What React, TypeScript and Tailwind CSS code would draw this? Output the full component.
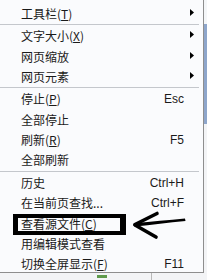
import React from 'react';

type Item =
  | { kind: 'sep' }
  | { kind: 'item'; label: string; key?: string; suffix?: string; shortcut?: string; sub?: boolean };

const items: Item[] = [
  { kind: 'item', label: '工具栏', key: 'T', sub: true },
  { kind: 'sep' },
  { kind: 'item', label: '文字大小', key: 'X', sub: true },
  { kind: 'item', label: '网页缩放', sub: true },
  { kind: 'item', label: '网页元素', sub: true },
  { kind: 'sep' },
  { kind: 'item', label: '停止', key: 'P', shortcut: 'Esc' },
  { kind: 'item', label: '全部停止' },
  { kind: 'item', label: '刷新', key: 'R', shortcut: 'F5' },
  { kind: 'item', label: '全部刷新' },
  { kind: 'sep' },
  { kind: 'item', label: '历史', shortcut: 'Ctrl+H' },
  { kind: 'item', label: '在当前页查找', suffix: '...', shortcut: 'Ctrl+F' },
  { kind: 'item', label: '查看源文件', key: 'C' },
  { kind: 'item', label: '用编辑模式查看' },
  { kind: 'item', label: '切换全屏显示', key: 'F', shortcut: 'F11' },
];

function SubArrow() {
  return (
    <svg width="4" height="7" viewBox="0 0 4 7" className="block">
      <path d="M0 0 L4 3.5 L0 7 Z" fill="#000" />
    </svg>
  );
}

function MenuRow({ item }: { item: Extract<Item, { kind: 'item' }> }) {
  return (
    <div className="flex h-[20.3px] items-center pl-[21px] pr-[9px]">
      <span className="flex-1 whitespace-nowrap">
        {item.label}
        {item.key && (
          <>
            (<span className="underline underline-offset-1">{item.key}</span>)
          </>
        )}
        {item.suffix}
      </span>
      {item.shortcut && <span className="mr-[10px] font-['Liberation_Sans',sans-serif]">{item.shortcut}</span>}
      {item.sub && (
        <span className="-mt-[3px]">
          <SubArrow />
        </span>
      )}
    </div>
  );
}

export default function App() {
  return (
    <div className="relative h-[280px] w-[207px] overflow-hidden bg-[#f3f4f6] font-['Noto_Sans_CJK_SC','Liberation_Sans',sans-serif] text-[12px] leading-none text-[#1a1a1a]">
      <div className="flex">
        <div className="relative h-[273px] w-[204px] overflow-hidden border-b border-r border-[#8e8e8e] bg-[#fafbfd] pt-[3.5px]">
          {items.map((item, i) =>
            item.kind === 'sep' ? (
              <div key={i} className="h-[2.3px] pt-[0.3px]">
                <div className="mr-[4px] h-px bg-[#c4c7cc]" />
              </div>
            ) : (
              <MenuRow key={i} item={item} />
            )
          )}

          {/* highlight box drawn over the screenshot */}
          <div className="absolute left-[13px] top-[214px] h-[21px] w-[113px] border-[4px] border-l-[5px] border-r-[6px] border-black" />

          {/* hand drawn arrow */}
          <svg className="absolute left-[130px] top-[208px]" width="60" height="34" viewBox="0 0 60 34">
            <path d="M5 16.5 L27 5.5" stroke="#000" strokeWidth="3.6" strokeLinecap="round" fill="none" />
            <path d="M5 17 L26 29" stroke="#000" strokeWidth="3.6" strokeLinecap="round" fill="none" />
            <path d="M5 15 C 22 13.5, 38 12, 55 10.5 L55.5 13 C 38 14.5, 22 17, 5 18.5 Z" fill="#000" />
          </svg>
        </div>
        <div className="flex w-[3px] flex-col">
          <div className="h-[24px] bg-[#f4f6f8]" />
          <div className="h-[100px] bg-[#8ea6cb]" />
        </div>
      </div>
      <div className="relative h-[7px]">
        <div className="absolute left-[97px] top-[2px] h-[3px] w-[10px] bg-[#5f9a4c]" />
        <div className="absolute left-[151px] top-0 h-[7px] w-px bg-[#b8b8b8]" />
      </div>
    </div>
  );
}
